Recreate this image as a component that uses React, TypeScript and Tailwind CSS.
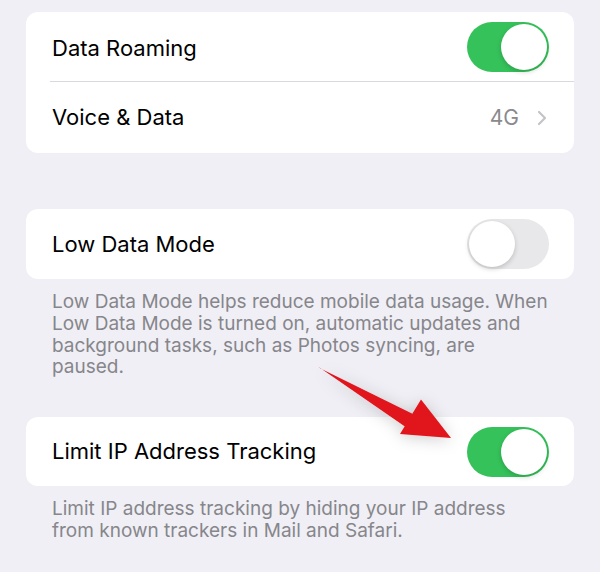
import React from 'react';

const font = { fontFamily: 'Inter, "Noto Sans", sans-serif' };

function Toggle({ on }: { on: boolean }) {
  return (
    <div
      className={`relative h-[50px] w-[82px] shrink-0 rounded-full ${
        on ? 'bg-[#35c25a]' : 'bg-[#e8e8ea]'
      }`}
    >
      <div
        className={`absolute top-[2px] h-[46px] w-[46px] rounded-full bg-white shadow-[0_2px_5px_rgba(0,0,0,0.18)] ${
          on ? 'right-[2px]' : 'left-[2px]'
        }`}
      />
    </div>
  );
}

function Card({ children }: { children: React.ReactNode }) {
  return <div className="mx-[26px] overflow-hidden rounded-[12px] bg-white">{children}</div>;
}

function Footer({ lines }: { lines: string[] }) {
  return (
    <div className="ml-[52px] mt-[12px] text-[19px] leading-[21.8px] text-[#86868b]">
      {lines.map((l) => (
        <div key={l} className="whitespace-nowrap">
          {l}
        </div>
      ))}
    </div>
  );
}

function Arrow() {
  return (
    <svg className="pointer-events-none absolute left-0 top-0" width="600" height="572">
      <defs>
        <filter id="glow" x="-30%" y="-30%" width="160%" height="160%">
          <feDropShadow dx="0" dy="2" stdDeviation="8" floodColor="#000" floodOpacity="0.2" />
        </filter>
      </defs>
      <g filter="url(#glow)">
        <path d="M318 366.5 L320.5 368.5 L419 417 L410 430 Z" fill="#e0141b" />
        <path d="M421 399.5 L451 438 L400 434 Z" fill="#e0141b" />
      </g>
    </svg>
  );
}

export default function App() {
  return (
    <div className="relative h-[572px] w-[600px] overflow-hidden bg-[#f0eff5] pt-[12px]" style={font}>
      <Card>
        <div className="flex h-[69px] items-center justify-between pl-[26px] pr-[25px]">
          <span className="mt-[3px] text-[22px] text-black">Data Roaming</span>
          <Toggle on />
        </div>
        <div className="ml-[24px] h-px bg-[#d9d9dd]" />
        <div className="flex h-[71px] items-center justify-between pl-[26px] pr-[27px]">
          <span className="text-[22px] text-black">Voice &amp; Data</span>
          <div className="flex items-center gap-[18px]">
            <span className="text-[21px] text-[#8a8a8e]">4G</span>
            <svg width="10" height="16" viewBox="0 0 10 16">
              <path d="M2 2 L8 8 L2 14" fill="none" stroke="#c4c4c7" strokeWidth="2.2" strokeLinecap="round" strokeLinejoin="round" />
            </svg>
          </div>
        </div>
      </Card>

      <div className="h-[56px]" />

      <Card>
        <div className="flex h-[70px] items-center justify-between pl-[26px] pr-[25px]">
          <span className="text-[22px] text-black">Low Data Mode</span>
          <Toggle on={false} />
        </div>
      </Card>
      <Footer
        lines={[
          'Low Data Mode helps reduce mobile data usage. When',
          'Low Data Mode is turned on, automatic updates and',
          'background tasks, such as Photos syncing, are',
          'paused.',
        ]}
      />

      <div className="h-[39px]" />

      <Card>
        <div className="flex h-[69px] items-center justify-between pl-[26px] pr-[25px]">
          <span className="text-[22px] text-black">Limit IP Address Tracking</span>
          <Toggle on />
        </div>
      </Card>
      <Footer
        lines={[
          'Limit IP address tracking by hiding your IP address',
          'from known trackers in Mail and Safari.',
        ]}
      />

      <Arrow />
    </div>
  );
}
